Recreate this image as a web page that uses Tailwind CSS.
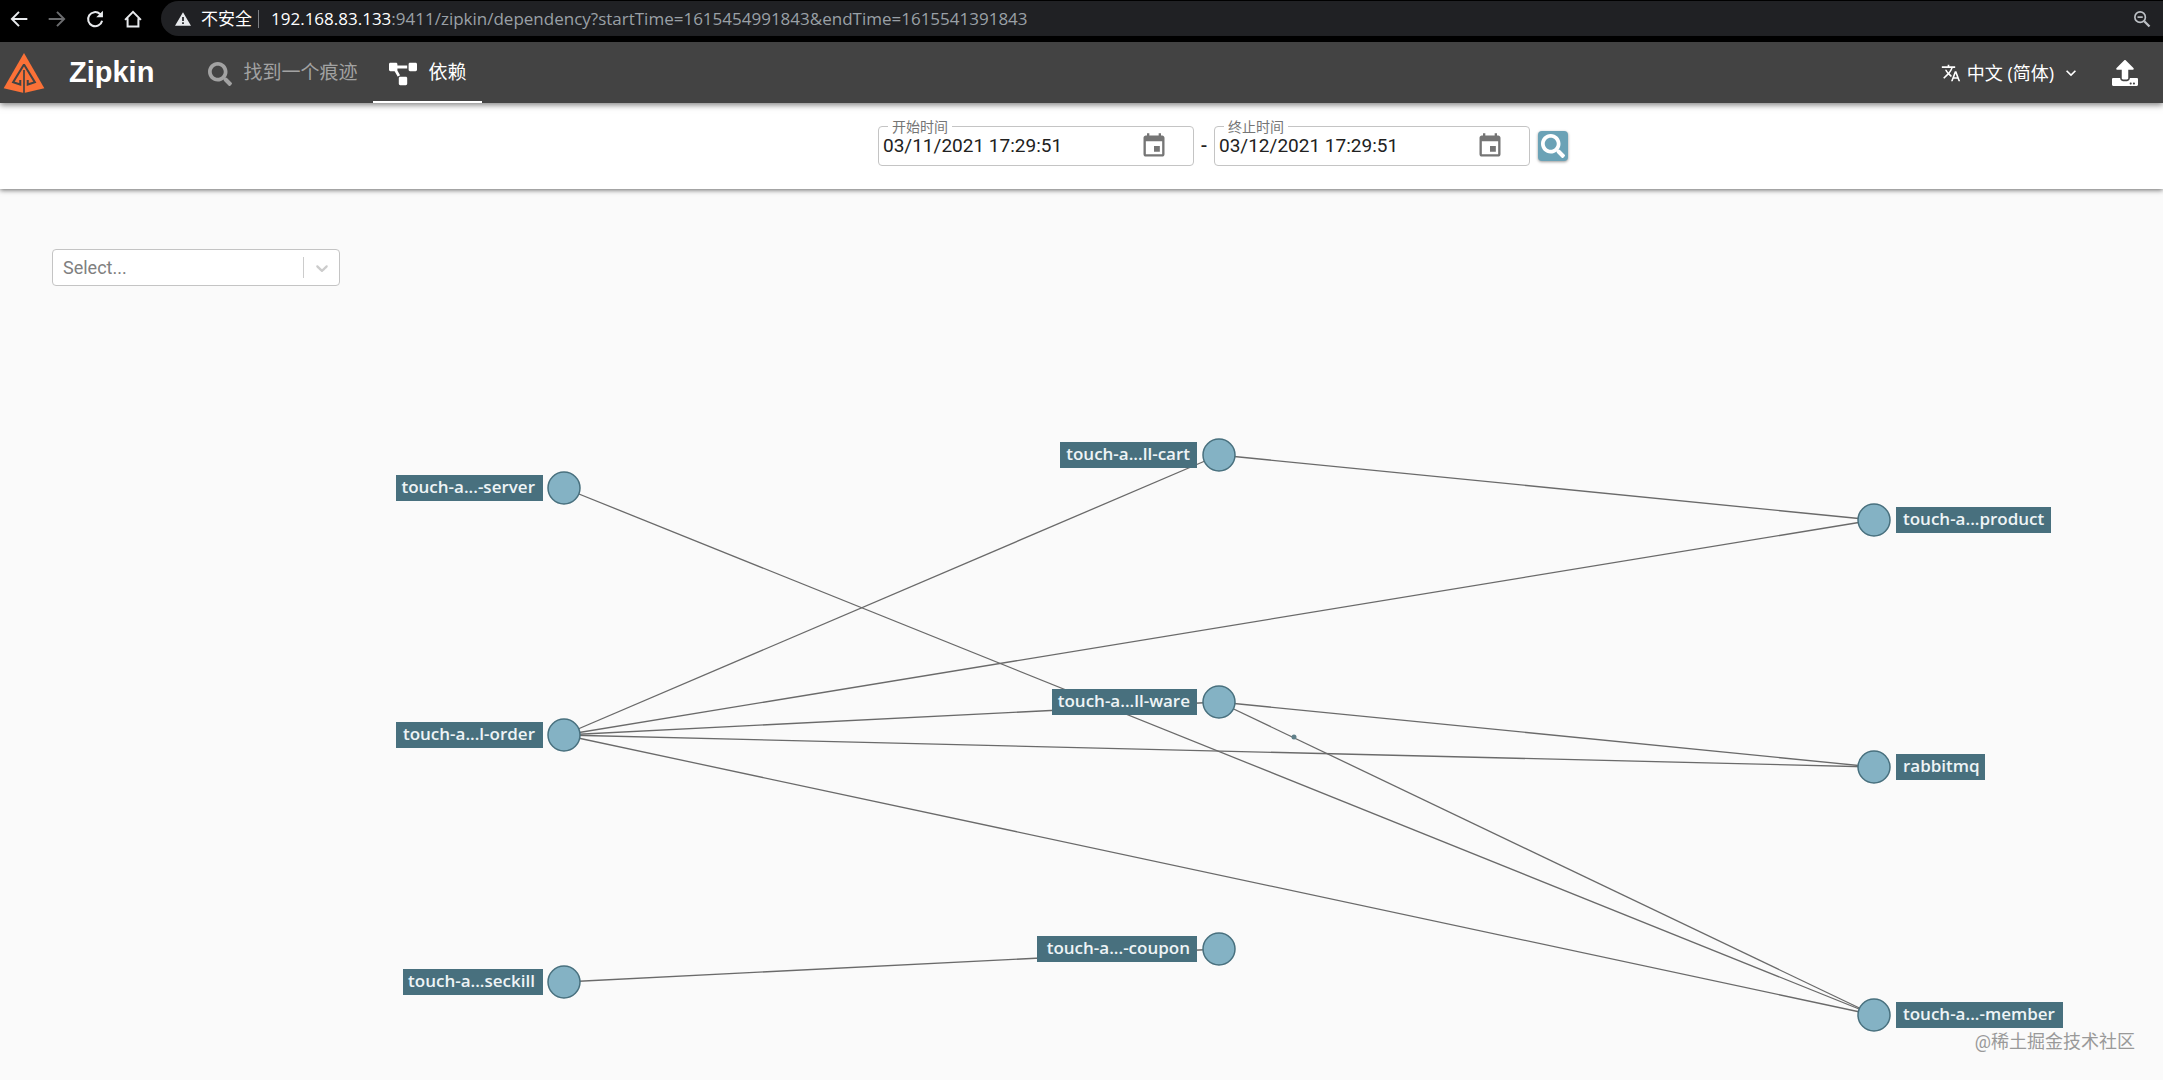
<!DOCTYPE html>
<html lang="zh-CN">
  <head>
    <meta charset="UTF-8" />
    <meta name="viewport" content="width=device-width, initial-scale=1.0" />
    <title>Zipkin</title>
    <script src="https://cdn.jsdelivr.net/npm/@tailwindcss/browser@4"></script>
    <style>
      body {
        font-family: Roboto, "Noto Sans CJK SC", sans-serif;
      }

      .chrome-text,
      .node-label {
        font-family: "Open Sans", "Noto Sans CJK SC", sans-serif;
      }
    </style>
  </head>
  <body class="flex min-h-screen flex-col bg-[#fafafa]">
    <!-- browser toolbar -->
    <div class="chrome-text flex h-[42px] items-start bg-black pt-px text-white">
      <div class="flex h-[35px] w-[161px] items-center gap-[18px] pl-[9px]">
        <button aria-label="Back">
          <svg class="size-5" viewBox="0 0 24 24" fill="none" stroke="#e8eaed" stroke-width="2.4"><path d="M22 12H4M12 3.5 3.5 12l8.5 8.5" /></svg>
        </button>
        <button aria-label="Forward">
          <svg class="size-5" viewBox="0 0 24 24" fill="none" stroke="#6b6c6e" stroke-width="2.4"><path d="M2 12h18M12 3.5 20.5 12 12 20.5" /></svg>
        </button>
        <button aria-label="Reload">
          <svg class="size-5" viewBox="0 0 24 24" fill="none" stroke="#e8eaed" stroke-width="2.4"><path d="M20.5 14A8.500 8.500 0 1 1 18 6l2 2" /><path d="M21.5 2v8h-8z" fill="#e8eaed" stroke="none" /></svg>
        </button>
        <button aria-label="Home">
          <svg class="size-5" viewBox="0 0 24 24" fill="none" stroke="#e8eaed" stroke-width="2.4"><path d="M2.5 13 12 3.5 21.5 13M5.500 11v10h13V11" /></svg>
        </button>
      </div>
      <div class="flex h-[35px] flex-1 items-center rounded-l-full bg-[#202124] pr-3 pl-[14px]">
        <svg class="size-4" viewBox="0 0 24 24" fill="#e8eaed"><path d="M12 2 0 22h24zm-1.300 7h2.600v6h-2.600zm0 8h2.600v2.600h-2.600z" fill-rule="evenodd" /></svg>
        <span class="ml-[10px] text-[17px] leading-6">不安全</span>
        <span class="mx-[6px] h-[18px] w-px bg-[#7c7e82]"></span>
        <div role="textbox" aria-label="Address" contenteditable="true" class="ml-[6px] flex-1 text-[17px] leading-6 whitespace-nowrap text-[#9aa0a6]"><span class="text-white">192.168.83.133</span>:9411/zipkin/dependency?startTime=1615454991843&amp;endTime=1615541391843</div>
        <button aria-label="Zoom">
          <svg class="size-[18px]" viewBox="0 0 24 24" fill="none" stroke="#bdc1c6" stroke-width="2.2"><circle cx="9.5" cy="9.5" r="7" /><path d="M6 9.5h7" /><path d="m15 15 7 7" stroke-width="3" /></svg>
        </button>
      </div>
    </div>

    <!-- app bar -->
    <header class="relative z-20 flex h-[61px] items-center bg-[#434343] text-white shadow-[0_2px_6px_rgba(0,0,0,0.5)]">
      <svg class="ml-[3px] h-10 w-[42px]" viewBox="0 0 120 118">
        <path d="M60 0 120 104 60 118 0 104z" fill="#fb7137" />
        <path d="M60 34 28 86l21 7V80M60 34l32 52-21 7V80" fill="none" stroke="#434343" stroke-width="6" />
        <path d="M60 50v68" fill="none" stroke="#434343" stroke-width="5" />
      </svg>
      <h1 class="ml-6 font-['Liberation_Sans'] text-[29px] font-bold">Zipkin</h1>
      <nav class="ml-[38px] flex h-full text-[19px]">
        <a href="#" class="flex items-center gap-[11px] px-4 pt-[2px] text-[#a2a2a2]">
          <svg class="size-6" viewBox="0 0 512 512" fill="currentColor"><path d="M505 442.700 405.300 343c-4.500-4.500-10.600-7-17-7H372c27.600-35.300 44-79.700 44-128C416 93.100 322.900 0 208 0S0 93.100 0 208s93.100 208 208 208c48.300 0 92.700-16.400 128-44v16.300c0 6.400 2.500 12.500 7 17l99.700 99.700c9.400 9.400 24.600 9.400 33.900 0l28.300-28.300c9.400-9.400 9.400-24.600.1-34zM208 336c-70.700 0-128-57.200-128-128 0-70.700 57.200-128 128-128 70.700 0 128 57.200 128 128 0 70.700-57.200 128-128 128z" /></svg>
          找到一个痕迹
        </a>
        <a href="#" class="flex items-center gap-[11px] border-b-2 border-white px-4 pt-1">
          <svg class="h-6 w-7" viewBox="0 0 640 512" fill="currentColor"><path d="M384 320H256c-17.670 0-32 14.330-32 32v128c0 17.670 14.330 32 32 32h128c17.670 0 32-14.330 32-32V352c0-17.670-14.330-32-32-32zM192 32c0-17.670-14.330-32-32-32H32C14.330 0 0 14.330 0 32v128c0 17.670 14.330 32 32 32h95.720l73.160 128.040C211.980 300.980 232.400 288 256 288h.28L192 175.510V128h224V64H192V32zM608 0H480c-17.670 0-32 14.330-32 32v128c0 17.670 14.330 32 32 32h128c17.670 0 32-14.330 32-32V32c0-17.670-14.330-32-32-32z" /></svg>
          依赖
        </a>
      </nav>
      <button class="ml-auto flex items-center text-[18px]">
        <svg class="size-5" viewBox="0 0 24 24" fill="currentColor"><path d="m12.870 15.070-2.540-2.510.03-.03c1.740-1.940 2.980-4.170 3.710-6.530H17V4h-7V2H8v2H1v1.990h11.170C11.500 7.920 10.440 9.750 9 11.350 8.070 10.320 7.300 9.190 6.690 8h-2c.73 1.630 1.730 3.170 2.980 4.560l-5.090 5.020L4 19l5-5 3.110 3.110.76-2.040zM18.500 10h-2L12 22h2l1.120-3h4.750L21 22h2l-4.500-12zm-2.620 7 1.620-4.330L19.120 17h-3.240z" /></svg>
        <span class="chrome-text ml-[6px] leading-6">中文 (简体)</span>
        <svg class="ml-[7px] size-5" viewBox="0 0 24 24" fill="currentColor"><path d="M7.410 8.590 12 13.170l4.590-4.580L18 10l-6 6-6-6z" /></svg>
      </button>
      <button class="mr-[25px] ml-[31px]" aria-label="Upload">
        <svg class="size-[26px]" viewBox="0 0 512 512" fill="currentColor"><path d="M296 384h-80c-13.300 0-24-10.700-24-24V192h-87.700c-17.800 0-26.700-21.500-14.100-34.100L242.300 5.700c7.500-7.500 19.800-7.500 27.300 0l152.200 152.200c12.600 12.600 3.700 34.100-14.100 34.100H320v168c0 13.300-10.700 24-24 24zm216-8v112c0 13.300-10.700 24-24 24H24c-13.300 0-24-10.700-24-24V376c0-13.300 10.700-24 24-24h136v8c0 30.900 25.100 56 56 56h80c30.900 0 56-25.100 56-56v-8h136c13.300 0 24 10.700 24 24zm-124 88c0-11-9-20-20-20s-20 9-20 20 9 20 20 20 20-9 20-20zm64 0c0-11-9-20-20-20s-20 9-20 20 9 20 20 20 20-9 20-20z" /></svg>
      </button>
    </header>

    <!-- time range -->
    <form class="relative z-10 flex h-[86px] items-start justify-center bg-white pt-[23px] pl-[283px] shadow-[0_1px_5px_rgba(0,0,0,0.6)]">
      <div class="relative flex h-10 w-[316px] items-center rounded-[4px] border border-[#c4c4c4] pl-1">
        <label for="start" class="absolute -top-[10px] left-[9px] bg-white px-1 text-[14px] leading-5 text-[#757575]">开始时间</label>
        <input id="start" type="text" value="03/11/2021 17:29:51" class="w-[257px] text-[19px] leading-5 text-[#212121] outline-none" />
        <button type="button" aria-label="Pick start time">
          <svg class="size-7" viewBox="0 0 24 24" fill="#757575"><path d="M17 12h-5v5h5v-5zM16 1v2H8V1H6v2H5c-1.110 0-1.990.9-1.990 2L3 19c0 1.100.89 2 2 2h14c1.100 0 2-.9 2-2V5c0-1.100-.9-2-2-2h-1V1h-2zm3 18H5V8h14v11z" /></svg>
        </button>
      </div>
      <span class="w-5 pt-2 text-center text-[19px] leading-6 font-medium text-[#212121]">-</span>
      <div class="relative flex h-10 w-[316px] items-center rounded-[4px] border border-[#c4c4c4] pl-1">
        <label for="end" class="absolute -top-[10px] left-[9px] bg-white px-1 text-[14px] leading-5 text-[#757575]">终止时间</label>
        <input id="end" type="text" value="03/12/2021 17:29:51" class="w-[257px] text-[19px] leading-5 text-[#212121] outline-none" />
        <button type="button" aria-label="Pick end time">
          <svg class="size-7" viewBox="0 0 24 24" fill="#757575"><path d="M17 12h-5v5h5v-5zM16 1v2H8V1H6v2H5c-1.110 0-1.990.9-1.990 2L3 19c0 1.100.89 2 2 2h14c1.100 0 2-.9 2-2V5c0-1.100-.9-2-2-2h-1V1h-2zm3 18H5V8h14v11z" /></svg>
        </button>
      </div>
      <button type="submit" aria-label="Search" class="mt-[5px] ml-2 flex size-[30px] items-center justify-center rounded-[4px] bg-[#6ba2b6] shadow-[0_1px_3px_rgba(0,0,0,0.4)]">
        <svg class="size-6" viewBox="0 0 512 512" fill="#fff"><path d="M505 442.700 405.300 343c-4.500-4.500-10.600-7-17-7H372c27.600-35.300 44-79.700 44-128C416 93.100 322.900 0 208 0S0 93.100 0 208s93.100 208 208 208c48.300 0 92.700-16.400 128-44v16.300c0 6.400 2.500 12.500 7 17l99.700 99.700c9.400 9.400 24.600 9.400 33.900 0l28.300-28.300c9.400-9.400 9.400-24.600.1-34zM208 336c-70.700 0-128-57.200-128-128 0-70.700 57.200-128 128-128 70.700 0 128 57.200 128 128 0 70.700-57.200 128-128 128z" /></svg>
      </button>
    </form>

    <main class="flex-1 pt-[60px]">
      <div class="relative ml-[52px] w-[288px]">
        <select aria-label="Service" class="block h-[37px] w-full appearance-none rounded-[4px] border border-[#c4c4c4] bg-white px-[10px] text-[18px] text-[#808080]">
          <option>Select...</option>
        </select>
        <div class="pointer-events-none absolute inset-y-2 right-0 flex w-[37px] items-center justify-center border-l border-[#ccc]">
          <svg class="size-5" viewBox="0 0 20 20" fill="#ccc"><path d="M4.516 7.548c.436-.446 1.043-.481 1.576 0L10 11.295l3.908-3.747c.533-.481 1.141-.446 1.574 0 .436.445.408 1.197 0 1.615-.406.418-4.695 4.502-4.695 4.502a1.095 1.095 0 0 1-1.576 0S4.924 9.581 4.516 9.163s-.436-1.170 0-1.615z" /></svg>
        </div>
      </div>

      <!-- dependency graph -->
      <svg class="block w-full" viewBox="0 286 2163 794">
        <g stroke="#6a6a6a" stroke-width="1.3">
          <path d="M564 488 1874 1015" />
          <path d="M564 735 1219 455" />
          <path d="M564 735 1874 520" />
          <path d="M564 735 1219 702" />
          <path d="M564 735 1874 767" />
          <path d="M564 735 1874 1015" />
          <path d="M564 982 1219 949" />
          <path d="M1219 455 1874 520" />
          <path d="M1219 702 1874 767" />
          <path d="M1219 702 1874 1015" />
        </g>
        <circle cx="1294" cy="737" r="2.5" fill="#5f7f89" />
        <g fill="#84b2c4" stroke="#48707e" stroke-width="1.5">
          <circle cx="564" cy="488" r="16" />
          <circle cx="564" cy="735" r="16" />
          <circle cx="564" cy="982" r="16" />
          <circle cx="1219" cy="455" r="16" />
          <circle cx="1219" cy="702" r="16" />
          <circle cx="1219" cy="949" r="16" />
          <circle cx="1874" cy="520" r="16" />
          <circle cx="1874" cy="767" r="16" />
          <circle cx="1874" cy="1015" r="16" />
        </g>
        <g fill="#48707e">
          <rect x="396" y="475" width="147" height="26" />
          <rect x="396" y="722" width="147" height="26" />
          <rect x="403" y="969" width="140" height="26" />
          <rect x="1060" y="442" width="137" height="26" />
          <rect x="1052" y="689" width="145" height="26" />
          <rect x="1037" y="936" width="160" height="26" />
          <rect x="1896" y="507" width="155" height="26" />
          <rect x="1896" y="754" width="89" height="26" />
          <rect x="1896" y="1002" width="167" height="26" />
        </g>
        <g class="node-label text-[17px] font-semibold" fill="#eef4f6" text-anchor="end">
          <text x="535" y="493">touch-a...-server</text>
          <text x="535" y="740">touch-a...l-order</text>
          <text x="535" y="987">touch-a...seckill</text>
          <text x="1190" y="460">touch-a...ll-cart</text>
          <text x="1190" y="707">touch-a...ll-ware</text>
          <text x="1190" y="954">touch-a...-coupon</text>
        </g>
        <g class="node-label text-[17px] font-semibold" fill="#eef4f6">
          <text x="1903" y="525">touch-a...product</text>
          <text x="1903" y="772">rabbitmq</text>
          <text x="1903" y="1020">touch-a...-member</text>
        </g>
        <text x="2135" y="1048" text-anchor="end" class="text-[18px]" fill="#999">@稀土掘金技术社区</text>
      </svg>
    </main>
  </body>
</html>
